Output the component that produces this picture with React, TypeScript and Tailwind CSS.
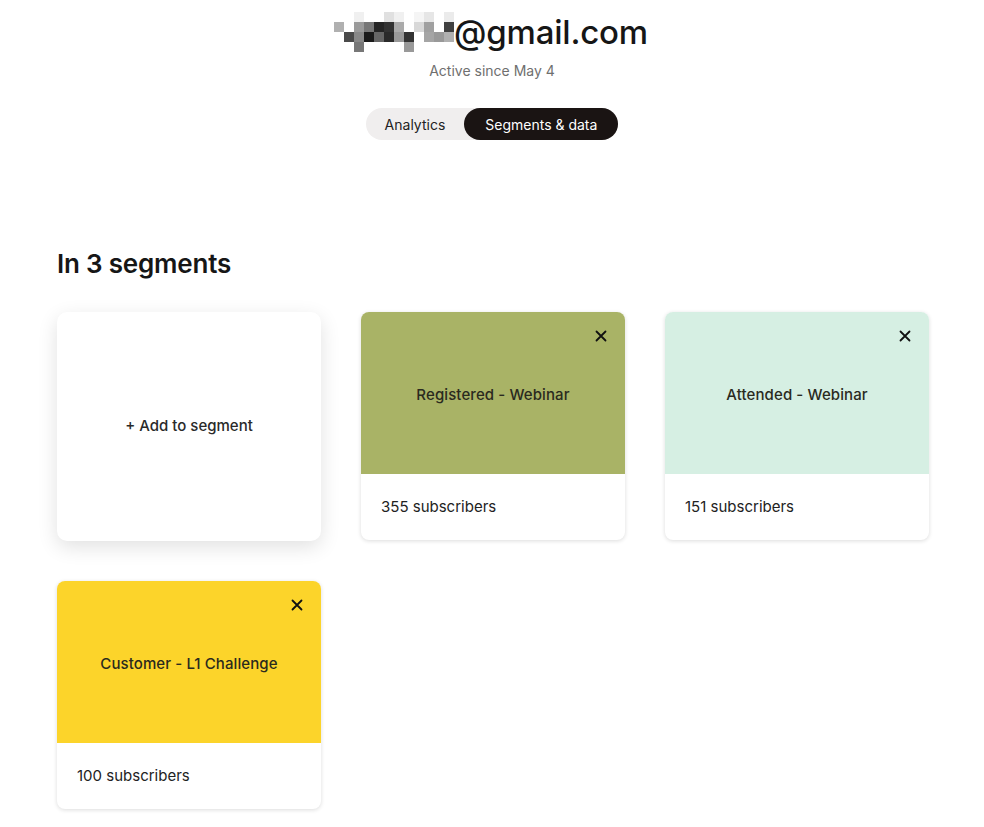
const pixels: string[][] = [
  ["#fff", "#fff", "#f0f0f0", "#fff", "#fff", "#e0e0e0", "#f0f0f0", "#fff", "#f5f5f5", "#e6e6e6", "#fff", "#ebebeb"],
  ["#b0b0b0", "#fff", "#9a9a9a", "#777", "#252525", "#333", "#aaa", "#fff", "#d8d8d8", "#a0a0a0", "#fff", "#404040"],
  ["#fff", "#4a4a4a", "#888", "#1a1a1a", "#666", "#2a2a2a", "#999", "#333", "#fff", "#a5a5a5", "#999", "#b0b0b0"],
  ["#fff", "#fff", "#777", "#fff", "#fff", "#fff", "#fff", "#999", "#fff", "#fff", "#fff", "#fff"],
];

function Redacted() {
  return (
    <svg width="120" height="40" viewBox="0 0 120 40" className="shrink-0">
      {pixels.map((row, r) =>
        row.map((c, i) => (
          <rect key={`${r}-${i}`} x={i * 10} y={r * 10} width="10" height="10" fill={c} />
        ))
      )}
    </svg>
  );
}

function CloseIcon() {
  return (
    <svg width="12" height="12" viewBox="0 0 12 12" className="text-[#111]">
      <path d="M1.5 1.5 L10.5 10.5 M10.5 1.5 L1.5 10.5" stroke="currentColor" strokeWidth="1.8" strokeLinecap="round" />
    </svg>
  );
}

type Segment = { name: string; count: number; bg: string };

const segments: Segment[] = [
  { name: "Registered - Webinar", count: 355, bg: "bg-[#a9b366]" },
  { name: "Attended - Webinar", count: 151, bg: "bg-[#d6efe3]" },
  { name: "Customer - L1 Challenge", count: 100, bg: "bg-[#fcd42a]" },
];

function SegmentCard({ s }: { s: Segment }) {
  return (
    <div className="h-[228px] rounded-[8px] overflow-hidden bg-white shadow-[0_1px_4px_rgba(0,0,0,0.14)] flex flex-col">
      <div className={`${s.bg} relative h-[162px] pt-[4px] flex items-center justify-center`}>
        <button className="absolute top-[18px] right-[18px] w-[12px] h-[12px] flex items-center justify-center">
          <CloseIcon />
        </button>
        <span className="text-[15px] font-medium text-[#2a2a1e] tracking-[0.1px]">{s.name}</span>
      </div>
      <div className="flex-1 flex items-center px-5 text-[15px] text-[#222]">
        {s.count} subscribers
      </div>
    </div>
  );
}

export default function App() {
  return (
    <div className="min-h-screen bg-white font-['Inter','Noto_Sans',sans-serif] text-[#161616]">
      <div className="flex flex-col items-center pt-3">
        <div className="flex items-center h-[40px] -ml-[2px]">
          <Redacted />
          <span className="text-[33px] font-medium tracking-[-0.2px] leading-none">@gmail.com</span>
        </div>
        <p className="mt-[9px] text-[14px] leading-5 text-[#6f6f6f]">Active since May 4</p>
        <div className="mt-[27px] flex items-center h-[32px] rounded-full bg-[#f0eeee] text-[14px]">
          <button className="px-[19px] h-full rounded-full text-[#222]">Analytics</button>
          <button className="px-[21px] h-full rounded-full bg-[#1a1413] text-white">Segments &amp; data</button>
        </div>
      </div>

      <div className="max-w-[872px] mx-auto mt-[111px] pb-5 translate-x-[1px]">
        <h2 className="text-[26px] font-semibold leading-none text-[#161616] tracking-[-0.2px]">In 3 segments</h2>
        <div className="mt-[35px] grid grid-cols-3 gap-10">
          <div className="h-[229px] rounded-[10px] bg-white shadow-[0_6px_20px_rgba(0,0,0,0.12)] flex items-center justify-center">
            <span className="text-[15px] font-medium text-[#2a2a2a]">+ Add to segment</span>
          </div>
          {segments.map((s) => (
            <SegmentCard key={s.name} s={s} />
          ))}
        </div>
      </div>
    </div>
  );
}
